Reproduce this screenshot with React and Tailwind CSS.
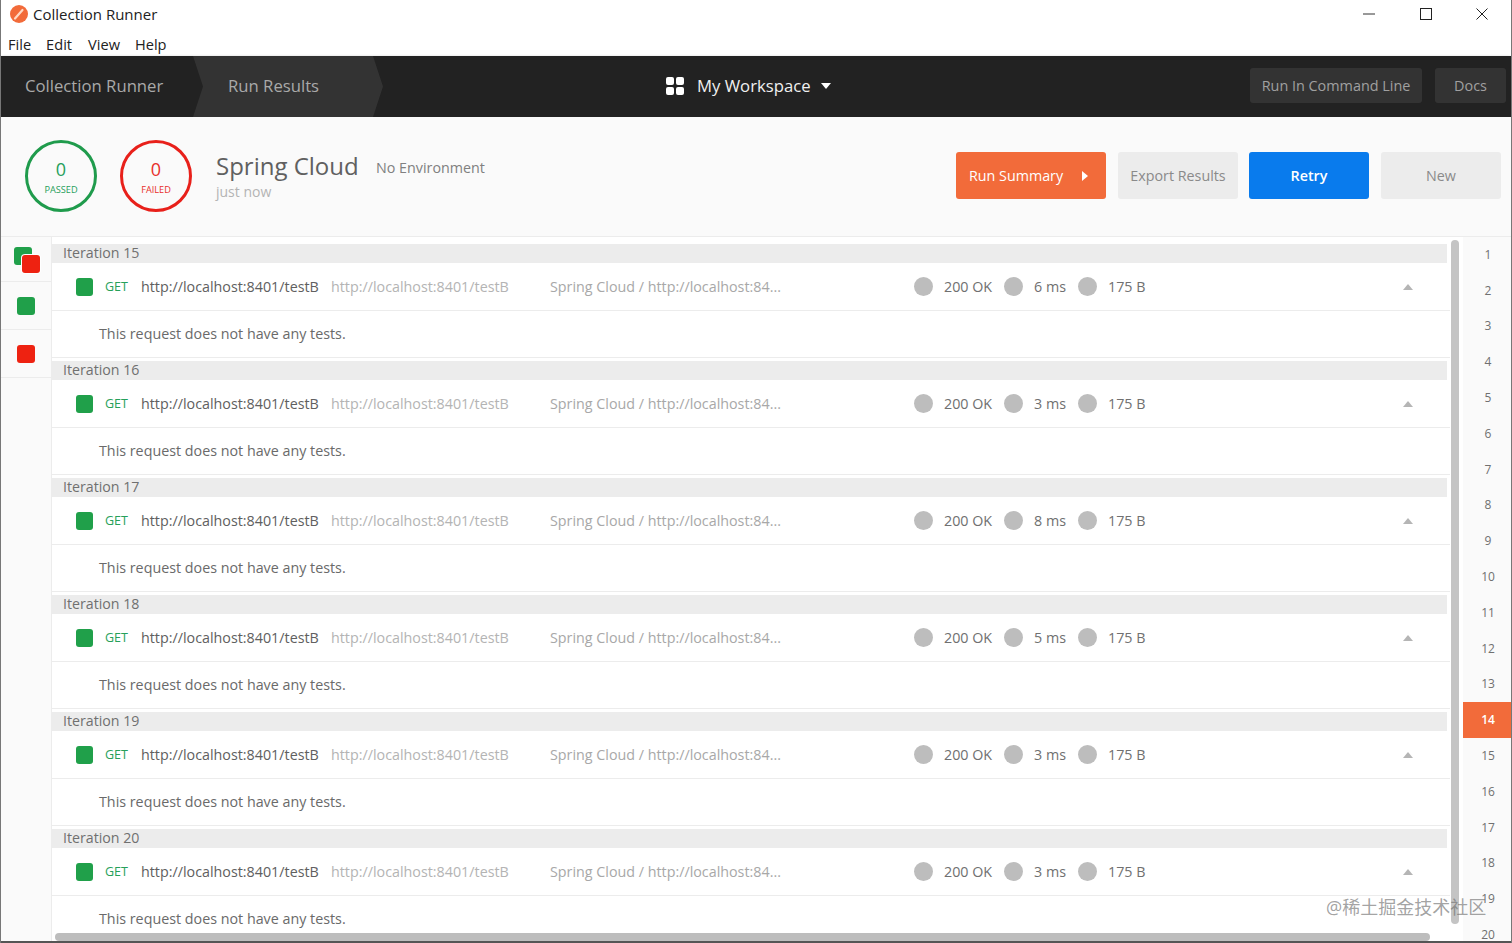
const font = { fontFamily: '"Open Sans", "Noto Sans CJK SC", sans-serif' };

const iterations = [
  { n: 15, ms: 6 },
  { n: 16, ms: 3 },
  { n: 17, ms: 8 },
  { n: 18, ms: 5 },
  { n: 19, ms: 3 },
  { n: 20, ms: 3 },
];
const pages = Array.from({ length: 20 }, (_, i) => i + 1);

function Dot() {
  return <span className="h-[19px] w-[19px] shrink-0 rounded-full bg-[#bdbdbd]" />;
}

function Iteration({ n, ms }) {
  return (
    <div className="h-[117px] shrink-0">
      <div className="mr-[3px] flex h-[19px] items-center bg-[#ececec] pl-[11px] text-[14.2px] leading-none text-[#707070]">
        Iteration {n}
      </div>
      <div className="flex h-[48px] items-center border-b border-[#ececec] pl-[24px] text-[14.3px] whitespace-nowrap">
        <span className="mr-[12px] h-[18px] w-[17px] shrink-0 rounded-[3px] bg-[#20a04a]" />
        <span className="w-[36px] shrink-0 pt-[2px] text-[12.5px] text-[#26a05a]">GET</span>
        <span className="w-[190px] shrink-0 text-[#606060]">http://localhost:8401/testB</span>
        <span className="w-[219px] shrink-0 text-[#b4b4b4]">http://localhost:8401/testB</span>
        <span className="w-[364px] shrink-0 text-[#a8a8a8]">Spring Cloud / http://localhost:84...</span>
        <Dot />
        <span className="w-[71px] shrink-0 pl-[11px] text-[#707070]">200 OK</span>
        <Dot />
        <span className="w-[55px] shrink-0 pl-[11px] text-[#707070]">{ms} ms</span>
        <Dot />
        <span className="w-[306px] shrink-0 pl-[11px] text-[#707070]">175 B</span>
        <span className="h-0 w-0 border-x-[5px] border-b-[6px] border-x-transparent border-b-[#b5b5b5]" />
      </div>
      <div className="flex h-[47px] items-center border-b border-[#ececec] pl-[47px] text-[14.3px] text-[#6a6a6a]">
        This request does not have any tests.
      </div>
    </div>
  );
}

export default function App() {
  return (
    <div
      style={font}
      className="relative flex h-[943px] w-[1512px] flex-col overflow-hidden border-x border-[#777777] bg-white"
    >
      {/* title bar */}
      <div className="h-[56px] shrink-0 bg-white text-[14.6px] text-[#222222]">
        <div className="flex h-[28px] items-center">
          <svg viewBox="0 0 18 18" className="ml-[9px] h-[18px] w-[18px]">
            <circle cx="9" cy="9" r="9" fill="#f26b3a" />
            <path d="M5 13.5 L12.5 5" stroke="#ffd9c4" strokeWidth="2.2" strokeLinecap="round" />
          </svg>
          <span className="ml-[5px] text-[15px]">Collection Runner</span>
          <div className="ml-auto flex items-center">
            <svg viewBox="0 0 12 12" className="mr-[45px] h-[12px] w-[12px]">
              <path d="M0 6H12" stroke="#333" strokeWidth="1" />
            </svg>
            <svg viewBox="0 0 12 12" className="mr-[44px] h-[12px] w-[12px]">
              <rect x="0.5" y="0.5" width="11" height="11" fill="none" stroke="#222" />
            </svg>
            <svg viewBox="0 0 12 12" className="mr-[23px] h-[12px] w-[12px]">
              <path d="M0.5 0.5L11.5 11.5M11.5 0.5L0.5 11.5" stroke="#222" />
            </svg>
          </div>
        </div>
        <div className="flex h-[28px] items-center pl-[7px] pt-[6px]">
          <span className="mr-[15px]">File</span>
          <span className="mr-[16px]">Edit</span>
          <span className="mr-[15px]">View</span>
          <span>Help</span>
        </div>
      </div>

      {/* dark bar */}
      <div className="flex h-[61px] shrink-0 items-center bg-[#222222] shadow-[0_1px_3px_rgba(0,0,0,0.3)]">
        <div className="w-[192px] shrink-0 pb-[2px] pl-[24px] text-[16.7px] text-[#a9a9a9]">Collection Runner</div>
        <div className="flex h-full w-[190px] shrink-0 items-center bg-[#333333] pb-[2px] pl-[35px] text-[16.7px] text-[#a9a9a9] [clip-path:polygon(0_0,180px_0,190px_50%,180px_100%,0_100%,10px_50%)]">
          Run Results
        </div>
        <div className="mb-[1px] ml-[283px] grid h-[18px] w-[18px] grid-cols-2 gap-[2px]">
          <span className="rounded-[2px] bg-white" />
          <span className="rounded-[2px] bg-white" />
          <span className="rounded-[2px] bg-white" />
          <span className="rounded-[2px] bg-white" />
        </div>
        <span className="ml-[13px] pb-[2px] text-[16.7px] font-medium text-[#f0f0f0]">My Workspace</span>
        <span className="mb-[1px] ml-[10px] h-0 w-0 border-x-[5px] border-t-[6px] border-x-transparent border-t-white" />
        <div className="ml-auto flex items-center gap-[13px] pb-[2px] pr-[5px] text-[14.4px] text-[#a0a0a0]">
          <span className="flex h-[35px] w-[172px] items-center justify-center rounded-[3px] bg-[#333333]">
            Run In Command Line
          </span>
          <span className="flex h-[35px] w-[71px] items-center justify-center rounded-[3px] bg-[#333333]">
            Docs
          </span>
        </div>
      </div>

      {/* run header */}
      <div className="flex h-[120px] shrink-0 items-center border-b border-[#ececec] bg-[#fafafa] pb-[2px]">
        <div className="ml-[24px] flex h-[72px] w-[72px] flex-col items-center justify-center rounded-full border-[3.5px] border-[#1f9b4c] pt-[3px] text-[#26a05a]">
          <span className="text-[18px] leading-[23px]">0</span>
          <span className="mt-[3px] text-[9.2px] leading-[12px]">PASSED</span>
        </div>
        <div className="ml-[23px] flex h-[72px] w-[72px] flex-col items-center justify-center rounded-full border-[3.5px] border-[#e8201a] pt-[3px] text-[#e8302a]">
          <span className="text-[18px] leading-[23px]">0</span>
          <span className="mt-[3px] text-[9.2px] leading-[12px]">FAILED</span>
        </div>
        <div className="ml-[24px] flex w-[160px] flex-col">
          <span className="text-[24px] leading-[32px] text-[#606060]">Spring Cloud</span>
          <span className="text-[14px] leading-[20px] text-[#b4b4b4]">just now</span>
        </div>
        <span className="mb-[16px] text-[14.3px] text-[#808080]">No Environment</span>
        <div className="ml-auto flex items-center pr-[10px] text-[14.3px]">
          <span className="flex h-[47px] w-[150px] items-center rounded-[3px] bg-[#f26b3a] pl-[13px] text-white">
            <span>Run Summary</span>
            <span className="ml-[19px] h-0 w-0 border-y-[5px] border-l-[6px] border-y-transparent border-l-white" />
          </span>
          <span className="ml-[12px] flex h-[47px] w-[120px] items-center justify-center rounded-[3px] bg-[#ececec] text-[#8a8a8a]">
            Export Results
          </span>
          <span className="ml-[11px] flex h-[47px] w-[120px] items-center justify-center rounded-[3px] bg-[#097bed] font-semibold text-white">
            Retry
          </span>
          <span className="ml-[12px] flex h-[47px] w-[120px] items-center justify-center rounded-[3px] bg-[#ececec] text-[#8a8a8a]">
            New
          </span>
        </div>
      </div>

      {/* body */}
      <div className="flex min-h-0 flex-1">
        <div className="w-[51px] shrink-0 border-r border-[#ececec] bg-[#fafafa]">
          <div className="flex h-[45px] border-b border-[#ececec]">
            <div className="relative ml-[13px] mt-[10px] h-[18px] w-[18px] rounded-[3px] bg-[#20a04a]">
              <span className="absolute left-[8px] top-[8px] h-[18px] w-[18px] rounded-[3px] bg-[#ee2211] shadow-[0_0_0_1px_#ffffff]" />
            </div>
          </div>
          <div className="flex h-[48px] items-center justify-center border-b border-[#ececec]">
            <span className="h-[18px] w-[18px] rounded-[3px] bg-[#20a04a]" />
          </div>
          <div className="flex h-[48px] items-center justify-center border-b border-[#ececec]">
            <span className="h-[18px] w-[18px] rounded-[3px] bg-[#ee2211]" />
          </div>
        </div>

        <div className="relative min-w-0 flex-1 overflow-hidden">
          <div className="flex w-[1398px] flex-col pt-[7px]">
            {iterations.map((it) => (
              <Iteration key={it.n} {...it} />
            ))}
          </div>
          <div className="absolute bottom-0 left-[3px] h-[8px] w-[1375px] rounded-full bg-[#bdbdbd]" />
          <div className="absolute left-[1399px] top-[3px] h-[684px] w-[8px] rounded-full bg-[#c4c4c4]" />
        </div>

        <div className="flex w-[48px] shrink-0 flex-col bg-[#fafafa] pl-[2px] text-[12px] text-[#707070]">
          {pages.map((p) => (
            <div
              key={p}
              className={
                p === 14
                  ? "-ml-[2px] flex h-[35.8px] shrink-0 items-center justify-center bg-[#f26b3a] pl-[2px] font-semibold text-white"
                  : "flex h-[35.8px] shrink-0 items-center justify-center"
              }
            >
              {p}
            </div>
          ))}
        </div>
      </div>

      <div className="h-[2px] shrink-0 bg-[#555555]" />

      <div className="absolute left-[1325px] top-[895px] text-[18px] leading-[24px] text-[rgba(110,110,110,0.65)]">
        @稀土掘金技术社区
      </div>
    </div>
  );
}
